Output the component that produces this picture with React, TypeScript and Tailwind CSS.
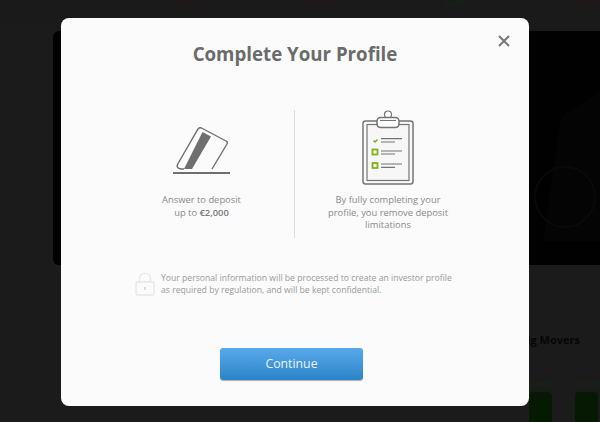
const font = { fontFamily: '"Open Sans", sans-serif' };

function CardIcon() {
  return (
    <svg width="58" height="48" viewBox="0 0 58 48" fill="none" stroke="#6f6f6f">
      {/* outline stops just above the slot line */}
      <path d="M11 42 H8 Q3 41 4.5 37.5 L25 2 Q26.5 0 28.5 1 L53 14 Q55 15 54 17 L39 42" strokeWidth="1.4" />
      <path d="M29.5 5 L38 9.5 L19 42 H11 Z" fill="#6f6f6f" stroke="none" />
      <path d="M0 46 H57" strokeWidth="2" />
    </svg>
  );
}

function ClipboardIcon() {
  return (
    <svg width="52" height="76" viewBox="0 0 52 76" fill="none" stroke="#747474">
      <circle cx="26" cy="4.5" r="3.5" strokeWidth="1.2" />
      <rect x="1" y="11" width="50" height="63" rx="2.5" strokeWidth="1.5" />
      <rect x="5" y="14.5" width="42" height="56" strokeWidth="1.2" fill="#f7f7f7" />
      <rect x="15" y="7.5" width="22" height="10" rx="3.5" strokeWidth="1.5" fill="#fbfbfb" />
      <path d="M18 10.5 H34" strokeWidth="1" />
      <path d="M11.5 30.5 L13 32 L15.5 29.5" stroke="#6fb01c" strokeWidth="1.5" />
      <rect x="10.5" y="39.5" width="5" height="5" stroke="#7ab51d" strokeWidth="1.8" />
      <rect x="10.5" y="53" width="5" height="5" stroke="#7ab51d" strokeWidth="1.8" />
      <path d="M19 28.7 H40 M19 32 H33 M19 41 H40 M19 44 H33 M19 54 H40 M19 57.3 H33" strokeWidth="1.2" />
    </svg>
  );
}

function LockIcon() {
  return (
    <svg width="20" height="24" viewBox="0 0 20 24" fill="none" stroke="#e6e6e6" strokeWidth="1.3">
      <path d="M4.5 10 V6.5 C4.5 -0.7 15.5 -0.7 15.5 6.5 V10" />
      <rect x="1" y="10" width="18" height="13" rx="1.5" />
      <path d="M10 15 V18" strokeWidth="2" stroke="#dcdcdc" />
    </svg>
  );
}

export default function App() {
  return (
    <div className="relative w-[600px] h-[422px] overflow-hidden bg-[#1b1b1b]" style={font}>
      {/* Dimmed page behind the dialog */}
      <div className="flex h-[31px] items-start bg-[#1a1a1a] pl-[178px] text-[9px] leading-[4px]">
        <span className="w-[132px] text-[#2a1212]">0.00</span>
        <span className="w-[135px] text-[#2a1212]">0.00</span>
        <span className="w-[135px] text-[#122a12]">0.00</span>
        <span className="text-[#2a1212]">0.00</span>
      </div>
      <div className="relative ml-[53px] h-[234px] overflow-hidden rounded-l-md bg-[#010101]">
        <svg className="absolute left-[460px] top-[60px]" width="87" height="150" viewBox="0 0 87 150" fill="none">
          <path d="M48 25 L87 0 V150 H30 Z" fill="#040404" />
          <circle cx="52" cy="106" r="30" stroke="#090909" strokeWidth="2" />
        </svg>
      </div>
      <div className="flex justify-end pr-[20px] pt-[67px] text-[11px] leading-[15px] font-bold text-[#060606]">Big Movers</div>
      <div className="flex justify-end gap-[23px] pr-[2px] pt-[32px]">
        {['2.94%', '2.92%'].map((p) => (
          <div key={p} className="flex w-[23px] flex-col items-center">
            <span className="text-[8px] leading-[10px] text-[#0f2f0f]">{p}</span>
            <div className="mt-[3px] h-[40px] w-[23px] rounded-t-sm bg-[#061a03]" />
          </div>
        ))}
      </div>

      {/* Dialog */}
      <div className="absolute left-[61px] top-[18px] flex h-[388px] w-[468px] flex-col items-center rounded-lg bg-[#fbfbfb]">
        <button className="absolute right-[18px] top-[16px] text-[#777]">
          <svg width="14" height="14" viewBox="0 0 14 14" stroke="currentColor" strokeWidth="2">
            <path d="M2 2 L12 12 M12 2 L2 12" />
          </svg>
        </button>
        <h1 className="mt-[21px] text-[18.7px] leading-[30px] font-bold text-[#6b6b6b]">Complete Your Profile</h1>

        <div className="mt-[41px] flex h-[128px] w-full">
          <div className="flex w-[234px] flex-col items-center border-r border-[#dcdcdc] pl-[48px] pt-[17px]">
            <CardIcon />
            <p className="mt-[19px] text-center text-[9.4px] leading-[12.5px] text-[#8a8a8a]">
              Answer to deposit
              <br />
              up to <span className="font-semibold text-[#777]">€2,000</span>
            </p>
          </div>
          <div className="flex flex-1 flex-col items-center pr-[48px]">
            <ClipboardIcon />
            <p className="mt-[8px] w-[125px] text-center text-[9.4px] leading-[12.5px] text-[#8a8a8a]">
              By fully completing your profile, you remove deposit limitations
            </p>
          </div>
        </div>

        <div className="mt-[34px] flex items-center gap-[6px] self-start pl-[74px]">
          <LockIcon />
          <p className="text-[8.65px] leading-[12px] text-[#9a9a9a]">
            Your personal information will be processed to create an investor profile
            <br />
            as required by regulation, and will be kept confidential.
          </p>
        </div>

        <button className="mr-[7px] mt-[52px] h-[32px] w-[143px] rounded-[3px] bg-gradient-to-b from-[#59a9ea] to-[#2a84c8] text-[12.3px] text-[#e8f3fb] shadow-[0_1px_1px_rgba(0,0,0,0.3)]">
          Continue
        </button>
      </div>
    </div>
  );
}
